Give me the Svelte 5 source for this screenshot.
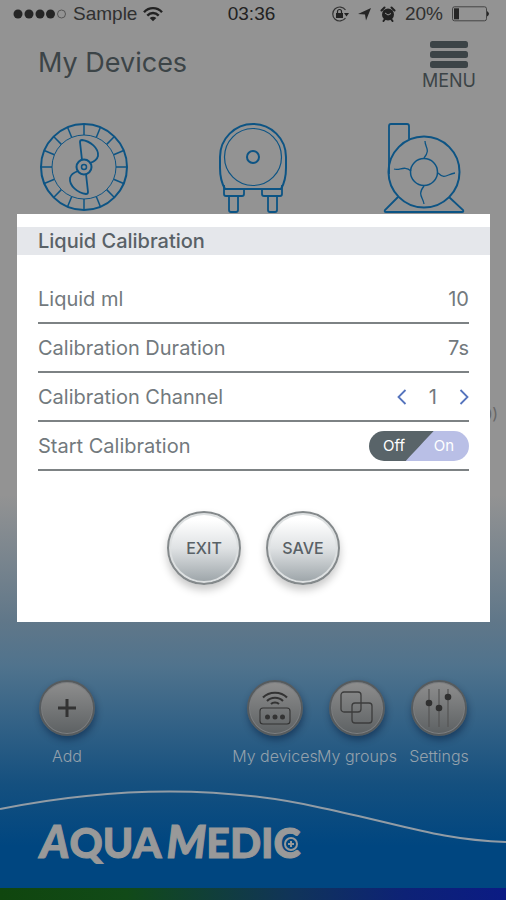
<script>
  let liquid = $state('10');
  let duration = $state('7s');
  let channel = $state(1);
  let running = $state(false);
  const spokes = Array.from({ length: 16 }, (_, i) => i * 22.5);
</script>

<div class="app">
  <div class="status">
    <div class="carrier">
      <svg width="54" height="12" viewBox="0 0 54 12" aria-hidden="true">
        <g fill="#252525">
          <circle cx="5" cy="6" r="4.5" /><circle cx="16" cy="6" r="4.5" />
          <circle cx="27" cy="6" r="4.5" /><circle cx="37.5" cy="6" r="4.5" />
        </g>
        <circle cx="48.5" cy="6" r="4" fill="none" stroke="#555" stroke-width="1" />
      </svg>
      <span>Sample</span>
      <svg width="20" height="16" viewBox="0 0 20 16" fill="none" stroke="#222" stroke-width="2.4" aria-hidden="true">
        <path d="M1 6.2C6 .8 14 .8 19 6.2M4.300 9.600c3.400-3.500 8-3.500 11.400 0" />
        <path d="M10 15.200L6.700 12.100c2-1.700 4.600-1.700 6.600 0z" fill="#222" stroke="none" />
      </svg>
    </div>
    <span class="clock">03:36</span>
    <div class="indicators">
      <svg width="18" height="18" viewBox="0 0 18 18" aria-hidden="true">
        <path d="M14.500 5A7 7 0 1 0 14.500 13" fill="none" stroke="#333" stroke-width="1.200" />
        <path d="M13 8h5l-2.500 3.500z" fill="#222" />
        <rect x="5" y="8" width="7" height="5" fill="#222" />
        <path d="M6.500 8V6.500a2 2 0 0 1 4 0V8" fill="none" stroke="#222" stroke-width="1.200" />
      </svg>
      <svg width="13" height="13" viewBox="0 0 13 13" aria-hidden="true"><path d="M13 0L8 12.500 7 6.500 0 6z" fill="#252525" /></svg>
      <svg width="16" height="16" viewBox="0 0 16 16" aria-hidden="true">
        <circle cx="8" cy="8.500" r="6" fill="#222" />
        <path d="M1.500 4.500l3-3M14.500 4.500l-3-3M3.500 15l1.500-2M12.500 15L11 13" stroke="#222" stroke-width="2" stroke-linecap="round" />
        <path d="M5 7l3 2 3-1.500" fill="none" stroke="#939393" stroke-width="1" />
      </svg>
      <span>20%</span>
      <svg width="38" height="16" viewBox="0 0 38 16" aria-hidden="true">
        <rect x=".5" y=".8" width="34" height="14" rx="2" fill="none" stroke="#444" />
        <rect x="2" y="2.300" width="5" height="11" fill="#252525" />
        <path d="M35 5q4 2.800 0 5.600z" fill="#252525" />
      </svg>
    </div>
  </div>

  <header>
    <h1>My Devices</h1>
    <button class="menu">
      <svg width="38" height="28" viewBox="0 0 38 28" fill="#3c4447" aria-hidden="true">
        <rect width="38" height="7" rx="2.500" /><rect y="10" width="38" height="7" rx="2.500" /><rect y="20" width="38" height="7" rx="2.500" />
      </svg>
      <span>MENU</span>
    </button>
  </header>

  <main>
    <div class="devices">
      <svg width="90" height="90" viewBox="0 0 90 90" role="img" aria-label="Stream pump">
        <circle cx="45" cy="45" r="43" stroke-width="2" />
        <circle cx="45" cy="45" r="32" stroke-width="1" />
        {#each spokes as angle}
          <path d="M45 2V13" transform="rotate({angle} 45 45)" />
        {/each}
        {#each [0, 180] as angle}
          <path d="M43 38L41 20q0-2 2-2C51 19 60 26 59 34C58 38 54 40 51 41" stroke-width="1.800" transform="rotate({angle} 45 45)" />
        {/each}
        <circle cx="45" cy="45" r="7.500" stroke-width="2" />
        <circle cx="45" cy="45" r="2.500" />
      </svg>
      <svg width="72" height="92" viewBox="0 0 72 92" role="img" aria-label="Dosing pump">
        <path d="M8 67C4 60 3 53 3 46V35a33 33 0 0 1 66 0V46c0 7-1 14-5 21z" stroke-width="2" />
        <circle cx="36" cy="35" r="28.500" stroke-width="1.200" />
        <circle cx="36" cy="35" r="6" stroke-width="2" />
        <path d="M7 63V72q0 2 2 2H25q2 0 2-2V67M65 63V72q0 2-2 2H47q-2 0-2-2V67" stroke-width="1.800" />
        <path d="M12 74V88q0 2 2 2h5q2 0 2-2V74M51 74V88q0 2 2 2h5q2 0 2-2V74" stroke-width="1.800" />
      </svg>
      <svg width="84" height="92" viewBox="0 0 84 92" role="img" aria-label="Return pump">
        <path d="M7 52V4q0-2 2-2H25q2 0 2 2V17" stroke-width="1.800" />
        <circle cx="42" cy="50" r="35.500" stroke-width="2" />
        <circle cx="42" cy="50" r="13.500" stroke-width="1.500" />
        <path d="M16 75L3 88q-1 2 1 2H80q2 0 1-2L67 75" stroke-width="1.800" />
        <path d="M43 19C43 26 49 27 42 36M12 47C18 49 22 43 29 49M56 51C63 58 65 52 73 51M42 64C35 73 41 75 42 82" stroke-width="1.300" />
      </svg>
    </div>
    <p class="count">(0)</p>
  </main>

  <nav>
    <a class="item" href="#add">
      <span class="disc">
        <svg width="18" height="18" viewBox="0 0 18 18" stroke="#333" stroke-width="3" aria-hidden="true"><path d="M9 0v18M0 9h18" /></svg>
      </span>
      <span class="label">Add</span>
    </a>
    <span class="push"></span>
    <a class="item" href="#devices">
      <span class="disc">
        <svg width="32" height="36" viewBox="0 0 32 36" fill="none" stroke="#333" aria-hidden="true">
          <path d="M4 7.500C10 1 22 1 28 7.500M8 11c4-4.300 12-4.300 16 0M12 14c2-2 6-2 8 0" stroke-width="2" />
          <rect x="1" y="18" width="30" height="16" rx="3" stroke-width="1.100" />
          <g fill="#333" stroke="none"><circle cx="8.500" cy="27" r="2.500" /><circle cx="16" cy="27" r="2.500" /><circle cx="23.500" cy="27" r="2.500" /></g>
        </svg>
      </span>
      <span class="label">My devices</span>
    </a>
    <a class="item" href="#groups">
      <span class="disc">
        <svg width="34" height="34" viewBox="0 0 34 34" fill="none" stroke="#3c3c3c" stroke-width="1.300" aria-hidden="true">
          <rect x="1" y="1" width="20" height="20" rx="3" /><rect x="12" y="12" width="20" height="20" rx="3" />
        </svg>
      </span>
      <span class="label">My groups</span>
    </a>
    <a class="item" href="#settings">
      <span class="disc">
        <svg width="28" height="40" viewBox="0 0 28 40" aria-hidden="true">
          <path d="M4 1V39M14 1V39M23 1V39" stroke="#555" stroke-width="1.200" />
          <g fill="#303030"><circle cx="4" cy="15" r="3.300" /><circle cx="14" cy="20" r="3.300" /><circle cx="23" cy="9" r="3.300" /></g>
        </svg>
      </span>
      <span class="label">Settings</span>
    </a>
  </nav>

  <footer>
    <svg class="wave" viewBox="0 0 506 56" preserveAspectRatio="none" fill="none" stroke="#929ca5" stroke-width="2" aria-hidden="true">
      <path d="M0 19C110 -3 220 -5 322 18C400 34 440 50 506 52" />
    </svg>
    <div class="logo"><span><i>A</i>QUA</span><span><i>M</i>EDI<span class="target">C<svg width="16" height="16" viewBox="0 0 16 16" aria-hidden="true"><circle cx="8" cy="8" r="6" fill="#004680" stroke="#999" stroke-width="2" /><path d="M8 5v6M5 8h6" stroke="#999" stroke-width="2" /></svg></span></span></div>
  </footer>
  <div class="stripe"></div>

  <form class="dialog" role="dialog" aria-labelledby="title" onsubmit={(e) => e.preventDefault()}>
    <h2 id="title">Liquid Calibration</h2>
    <div class="fields">
      <div class="row"><label for="liquid">Liquid ml</label><input id="liquid" type="text" bind:value={liquid} /></div>
      <div class="row"><label for="duration">Calibration Duration</label><input id="duration" type="text" bind:value={duration} /></div>
      <div class="row">
        <span>Calibration Channel</span>
        <div class="stepper">
          <button type="button" aria-label="Previous channel" onclick={() => (channel = Math.max(1, channel - 1))}>
            <svg width="10" height="16" viewBox="0 0 10 16"><path d="M8.500 1L1.500 8l7 7" /></svg>
          </button>
          <output>{channel}</output>
          <button type="button" aria-label="Next channel" onclick={() => (channel += 1)}>
            <svg width="10" height="16" viewBox="0 0 10 16"><path d="M1.500 1L8.500 8l-7 7" /></svg>
          </button>
        </div>
      </div>
      <div class="row">
        <label for="start">Start Calibration</label>
        <label class="toggle" class:running>
          <input id="start" type="checkbox" role="switch" bind:checked={running} />
          <span>Off</span><span>On</span>
        </label>
      </div>
    </div>
    <div class="actions">
      <button type="button">EXIT</button>
      <button type="submit">SAVE</button>
    </div>
  </form>
</div>

<style>
  :global(body) { margin: 0; }
  .app {
    position: relative;
    display: flex;
    flex-direction: column;
    min-height: 100vh;
    box-sizing: border-box;
    font-family: Inter, "Liberation Sans", sans-serif;
    color: #3c4447;
    background: linear-gradient(#939393 0, #939393 55%, #607789 69%, #50738d 74%, #15507f 87%, #004680 94%);
  }
  svg { display: block; flex: none; }
  button { font: inherit; color: inherit; border: 0; padding: 0; background: none; cursor: pointer; }
  .status {
    display: grid;
    grid-template-columns: 1fr auto 1fr;
    align-items: center;
    height: 28px;
    padding: 0 16px 0 13px;
    font: 19px/28px "Liberation Sans", sans-serif;
    color: #303030;
  }
  .carrier, .indicators { display: flex; align-items: center; gap: 6px; }
  .indicators { justify-content: flex-end; gap: 9px; }
  .clock { color: #222; }
  header { display: flex; justify-content: space-between; align-items: flex-start; padding: 13px 30px 0 38px; }
  h1 { margin: 5px 0 0; font-size: 27px; line-height: 34px; font-weight: 400; }
  .menu { display: flex; flex-direction: column; align-items: center; gap: 2px; font-size: 18px; line-height: 20px; }
  main { flex: 1; }
  .devices {
    display: grid;
    grid-template-columns: 1fr auto 1fr;
    align-items: start;
    padding: 31px 40px 0 39px;
  }
  .devices svg { fill: none; stroke: #0d5484; stroke-width: 1.500; }
  .devices svg:last-child { justify-self: end; }
  .count { margin: 188px 8px 0; text-align: right; font-size: 16px; line-height: 24px; color: #666; }
  nav { display: flex; padding: 0 26px; }
  .push { flex: 1; }
  .item { width: 82px; display: flex; flex-direction: column; align-items: center; gap: 8px; text-decoration: none; color: #94a1ac; }
  .disc {
    display: grid;
    place-items: center;
    width: 56px;
    height: 56px;
    box-sizing: border-box;
    border-radius: 50%;
    border: 2px solid #565b5e;
    background: linear-gradient(#8e8e8e, #5d6163);
    box-shadow: inset 0 0 0 1px #7c7e80, 1px 4px 7px rgba(0, 20, 50, .45);
  }
  .label { font-size: 16px; line-height: 24px; font-weight: 300; white-space: nowrap; }
  footer { display: grid; margin-top: 22px; height: 98px; }
  .wave, .logo { grid-area: 1 / 1; }
  .wave { width: 100%; height: 56px; }
  .logo {
    display: flex;
    gap: 5px;
    padding: 29px 0 0 40px;
    font: 900 41px/48px Lato, sans-serif;
    color: #999;
    -webkit-text-stroke: 1px #999;
  }
  .logo i { font-size: 45px; line-height: 40px; }
  .target { position: relative; }
  .target svg { position: absolute; left: 9px; top: 18px; }
  .stripe { height: 12px; background: linear-gradient(90deg, #10460e, #114a18 25%, #10345a 58%, #0d2276 80%, #0b1b84); }

  .dialog { position: absolute; top: 214px; left: 17px; right: 16px; padding: 13px 0 37px; background: #fff; color: #72797d; }
  h2 { margin: 0; padding: 0 21px; font-size: 20px; line-height: 28px; font-weight: 500; color: #596167; background: #e5e7eb; }
  .fields { padding: 20px 21px 0; font-size: 20px; line-height: 24px; font-weight: 400; }
  .row { display: flex; justify-content: space-between; align-items: center; height: 47px; border-bottom: 2px solid #7d8284; }
  .row > input { width: 80px; padding: 0; border: 0; background: none; font: inherit; color: inherit; text-align: right; }
  .stepper { display: flex; align-items: center; gap: 22px; }
  .stepper svg { fill: none; stroke: #5574bd; stroke-width: 1.800; }
  .toggle {
    position: relative;
    display: flex;
    width: 100px;
    height: 30px;
    border-radius: 15px;
    font-size: 15px;
    line-height: 30px;
    color: #fff;
    background: linear-gradient(133deg, #596469 50%, #b9bfe6 51%);
  }
  .toggle.running { background: linear-gradient(133deg, #b9bfe6 50%, #596469 51%); }
  .toggle span { flex: 1; text-align: center; }
  .toggle input { position: absolute; inset: 0; width: 100%; height: 100%; margin: 0; opacity: 0; }
  .actions { display: flex; justify-content: center; gap: 25px; padding-top: 40px; }
  .actions button {
    width: 74px;
    height: 74px;
    border-radius: 50%;
    border: 2px solid #84898b;
    background: linear-gradient(#fff 10%, #dfe2e4 50%, #9ba3a7);
    box-shadow: inset 0 0 0 2px #dde0e1, 0 5px 8px rgba(0, 0, 0, .22);
    font-size: 16px;
    font-weight: 500;
    color: #596166;
  }
</style>
